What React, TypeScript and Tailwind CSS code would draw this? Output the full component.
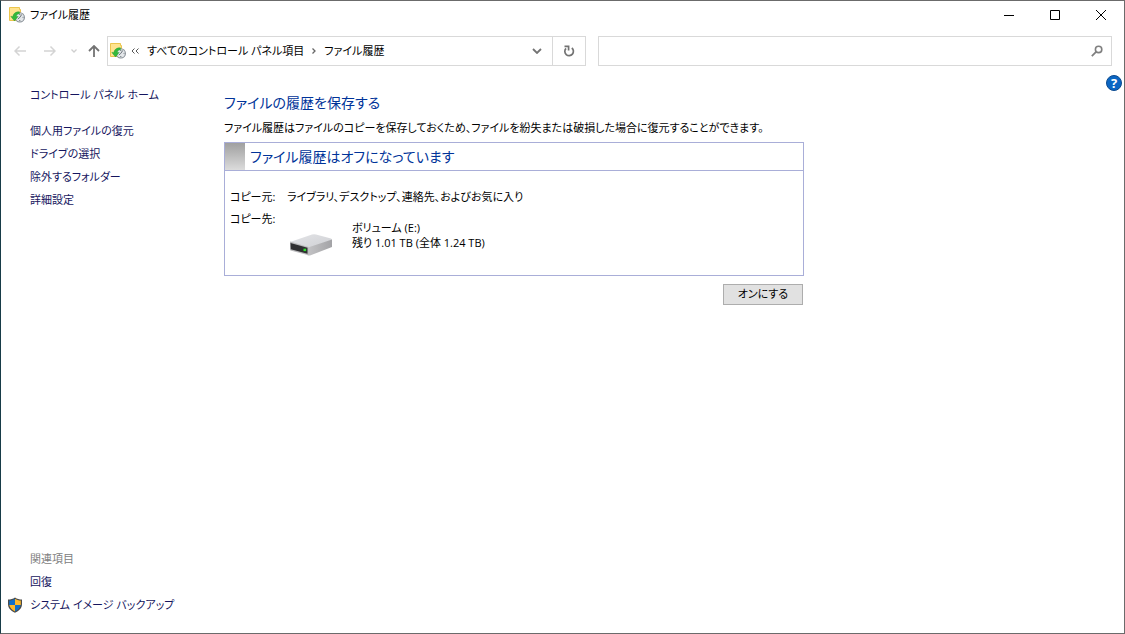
import type { ReactNode } from "react";

function HistoryIcon() {
    return (
        <svg viewBox="0 0 16 16" className="h-4 w-4 shrink-0" aria-hidden="true">
            <path d="M0.5 0.5h10v2h1v11h-11z" fill="#ffe38f" stroke="#ebc54d" />
            <circle cx="10.8" cy="10.4" r="4.6" fill="#e4e7ea" stroke="#858d94" strokeWidth="1.1" />
            <path d="M10.8 10.4l2-3M10.8 10.4l-2 1.6M10.8 7v1M10.8 13v1M13.6 10.4h.8" stroke="#5b646b" strokeWidth="0.9" />
            <path d="M10.4 4.8C6.800 4.600 4.200 6.400 4 9.400H1.800l3.700 4.600 3.700-4.600H7.400c0-1.600 1.100-2.500 3-2.600z" fill="#35b83c" stroke="#1a9a2b" strokeWidth="0.4" />
        </svg>
    );
}

function ShieldIcon() {
    return (
        <svg viewBox="0 0 16 16" className="h-4 w-4 shrink-0" aria-hidden="true">
            <path d="M8 0.4C6 1.800 3.600 2.400 1 2.400V7c0 4.200 3 7 7 8.700C12 14 15 11.200 15 7V2.400C12.400 2.400 10 1.800 8 0.400z" fill="#4a4a4a" />
            <path d="M8 1.700C6.200 2.900 4.400 3.400 2.200 3.500V8H8z" fill="#0f6fc9" />
            <path d="M8 1.700C9.800 2.900 11.600 3.400 13.800 3.500V8H8z" fill="#fdb92b" />
            <path d="M2.300 8c.5 3 2.700 5.100 5.700 6.400V8z" fill="#fdb92b" />
            <path d="M13.700 8c-.5 3-2.700 5.100-5.700 6.400V8z" fill="#0f6fc9" />
        </svg>
    );
}

function DriveIcon() {
    return (
        <svg viewBox="0 0 44 24" className="h-6 w-11" aria-hidden="true">
            <defs>
                <linearGradient id="driveTop" x1="0" y1="0" x2="1" y2="1">
                    <stop offset="0" stopColor="#e3e4e7" />
                    <stop offset="1" stopColor="#cfd0d4" />
                </linearGradient>
                <linearGradient id="driveSide" x1="0" y1="0" x2="1" y2="0">
                    <stop offset="0" stopColor="#c4c4c6" />
                    <stop offset="1" stopColor="#a3a3a6" />
                </linearGradient>
            </defs>
            <path d="M1 9L23 1.500Q25 1 27 1.500L42 5.500Q43 6 43 7L20 15z" fill="url(#driveTop)" />
            <path d="M19 14.500L43 6.500V14L21 22.500Q19 22.500 18 22z" fill="url(#driveSide)" />
            <path d="M1 8.500L19.500 14V22.300L1.500 17.500Q1 17 1 16z" fill="#b9b9bb" />
            <path d="M1.500 10L18.500 14.800V20.800L1.800 16.300z" fill="#2f2f31" />
            <rect x="14.500" y="15.700" width="2.600" height="2.400" fill="#2ee02e" />
        </svg>
    );
}

function SideLink({ children }: { children: ReactNode }) {
    return (
        <a href="#" className="w-fit text-[#15155e] hover:underline">
            {children}
        </a>
    );
}

const tasks = ["個人用ファイルの復元", "ドライブの選択", "除外するフォルダー", "詳細設定"];

export default function App() {
    return (
        <div className="flex min-h-screen flex-col border border-[#6b6b6b] border-l-[#173b47] bg-white font-['Open_Sans','Noto_Sans_CJK_JP',sans-serif] text-[11px] text-black [font-feature-settings:'palt']">
            <header className="flex h-7 items-center pl-2">
                <HistoryIcon />
                <h1 className="ml-[5px] flex-1">ファイル履歴</h1>
                <button aria-label="最小化" className="flex h-7 w-[46px] items-center justify-center">
                    <svg viewBox="0 0 10 10" className="h-[10px] w-[10px]"><path d="M0 5.500h10" stroke="#000" /></svg>
                </button>
                <button aria-label="最大化" className="flex h-7 w-[46px] items-center justify-center">
                    <svg viewBox="0 0 10 10" className="h-[10px] w-[10px]"><path d="M.5 .5h9v9h-9z" fill="none" stroke="#000" /></svg>
                </button>
                <button aria-label="閉じる" className="flex h-7 w-[46px] items-center justify-center">
                    <svg viewBox="0 0 10 10" className="h-[10px] w-[10px]"><path d="M0 0l10 10M10 0L0 10" stroke="#000" /></svg>
                </button>
            </header>

            <nav className="mt-[7px] flex h-[30px] items-center pr-3">
                <button aria-label="戻る" className="ml-[11px] flex w-4 justify-center">
                    <svg viewBox="0 0 12 12" className="h-3 w-3"><path d="M12 6H1M5.500 1.500L1 6l4.500 4.500" fill="none" stroke="#d4d4d4" strokeWidth="1.500" /></svg>
                </button>
                <button aria-label="進む" className="ml-[14px] flex w-4 justify-center">
                    <svg viewBox="0 0 12 12" className="h-3 w-3"><path d="M0 6h11M6.500 1.500L11 6l-4.500 4.500" fill="none" stroke="#d4d4d4" strokeWidth="1.500" /></svg>
                </button>
                <button aria-label="最近表示した場所" className="ml-2 flex w-4 justify-center">
                    <svg viewBox="0 0 6 4" className="h-1 w-[6px]"><path d="M.5 .5L3 3 5.500 .5" fill="none" stroke="#cfcfcf" strokeWidth="1.300" /></svg>
                </button>
                <button aria-label="上へ" className="ml-1 flex w-4 justify-center">
                    <svg viewBox="0 0 12 12" className="h-3 w-3"><path d="M6 12V1M1 6l5-5 5 5" fill="none" stroke="#737373" strokeWidth="1.800" /></svg>
                </button>

                <div className="ml-[5px] flex h-[30px] min-w-0 flex-[479] border border-[#d9d9d9]">
                    <div className="flex flex-1 items-center pl-[2px]">
                        <HistoryIcon />
                        <svg viewBox="0 0 8 6" className="ml-[5px] h-[6px] w-2" aria-hidden="true"><path d="M3.500 .5L1 3l2.500 2.500M7.500 .5L5 3l2.500 2.500" fill="none" stroke="#555" /></svg>
                        <a href="#" className="ml-2 whitespace-nowrap">すべてのコントロール パネル項目</a>
                        <svg viewBox="0 0 4 6" className="mx-2 h-[6px] w-1" aria-hidden="true"><path d="M.5 .5L3 3 .5 5.500" fill="none" stroke="#666" strokeWidth="1.300" /></svg>
                        <a href="#" className="whitespace-nowrap">ファイル履歴</a>
                        <button aria-label="以前の場所" className="ml-auto flex h-full w-[30px] items-center justify-center">
                            <svg viewBox="0 0 10 6" className="h-[6px] w-[10px]"><path d="M1 1l4 4 4-4" fill="none" stroke="#737373" strokeWidth="1.800" /></svg>
                        </button>
                    </div>
                    <button aria-label="最新の情報に更新" className="flex w-[33px] items-center justify-center border-l border-[#d9d9d9]">
                        <svg viewBox="0 0 12 12" className="h-3 w-3"><path d="M8.800 3A4.300 4.300 0 1 1 3 3.400M1.500 1.300H5.600V5.400" fill="none" stroke="#737373" strokeWidth="1.700" /></svg>
                    </button>
                </div>

                <div className="ml-3 flex h-[30px] min-w-0 flex-[514] items-center border border-[#d9d9d9]">
                    <input type="search" aria-label="コントロール パネルの検索" className="h-full min-w-0 flex-1 px-2 outline-none" />
                    <svg viewBox="0 0 12 12" className="mr-2 h-3 w-3" aria-hidden="true"><circle cx="7.600" cy="4.400" r="3.200" fill="none" stroke="#7f7f7f" strokeWidth="1.600" /><path d="M5.300 6.700L.8 11.200" stroke="#7f7f7f" strokeWidth="1.800" /></svg>
                </div>
            </nav>

            <div className="flex flex-1">
                <aside className="flex w-[200px] shrink-0 flex-col pl-[29px] pt-[17px] leading-[23px]">
                    <SideLink>コントロール パネル ホーム</SideLink>
                    <div className="mt-[13px] flex flex-col">
                        {tasks.map((task) => (
                            <SideLink key={task}>{task}</SideLink>
                        ))}
                    </div>
                    <div className="mt-auto flex flex-col pb-[17px]">
                        <h2 className="text-[#808080]">関連項目</h2>
                        <SideLink>回復</SideLink>
                        <div className="-ml-[23px] flex items-center gap-[7px]">
                            <ShieldIcon />
                            <SideLink>システム イメージ バックアップ</SideLink>
                        </div>
                    </div>
                </aside>

                <main className="min-w-0 flex-1 pl-[23px] pt-[25px]">
                    <h2 className="text-sm leading-6 text-[#003399]">ファイルの履歴を保存する</h2>
                    <p className="mt-[5px] leading-4">
                        ファイル履歴はファイルのコピーを保存しておくため、ファイルを紛失または破損した場合に復元することができます。
                    </p>
                    <section className="mt-[6px] max-w-[580px] border border-[#a9aed8]">
                        <div className="flex h-7 items-center border-b border-[#a9aed8]">
                            <div className="h-full w-5 bg-linear-to-b from-[#a0a0a0] to-[#dcdcdc]" />
                            <h3 className="ml-[5px] text-sm leading-6 text-[#003399]">ファイル履歴はオフになっています</h3>
                        </div>
                        <dl className="grid grid-cols-[57px_1fr] gap-y-[6px] pb-[18px] pl-[5px] pt-[18px] leading-4">
                            <dt>コピー元:</dt>
                            <dd>ライブラリ、デスクトップ、連絡先、およびお気に入り</dd>
                            <dt>コピー先:</dt>
                            <dd className="flex pl-[2px] pt-[9px]">
                                <div className="pt-[13px]">
                                    <DriveIcon />
                                </div>
                                <div className="ml-[19px] leading-[15px]">
                                    <p>ボリューム (E:)</p>
                                    <p>残り 1.01 TB (全体 1.24 TB)</p>
                                </div>
                            </dd>
                        </dl>
                    </section>
                    <div className="mt-2 flex max-w-[579px] justify-end">
                        <button className="h-[21px] w-20 border border-[#adadad] bg-[#e1e1e1]">オンにする</button>
                    </div>
                </main>

                <div className="w-[18px] shrink-0 pt-[9px]">
                    <button aria-label="ヘルプ" className="flex h-4 w-4 items-center justify-center rounded-full border border-[#0b4a8f] bg-[#0b66c3] text-[13px] font-bold leading-none text-white">
                        ?
                    </button>
                </div>
            </div>
        </div>
    );
}
